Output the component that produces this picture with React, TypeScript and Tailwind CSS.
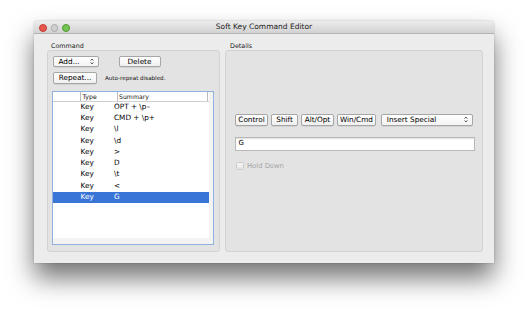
import React from "react";

// Soft Key Command Editor — Mac-style utility window

const FONT = { fontFamily: '"DejaVu Sans", "Liberation Sans", sans-serif' };

interface ButtonProps {
  label: string;
  width: string;
}

interface PopupProps {
  label: string;
  width: string;
}

const rows: [string, string][] = [
  ["Key", "OPT + \\p\u2013"],
  ["Key", "CMD + \\p+"],
  ["Key", "\\l"],
  ["Key", "\\d"],
  ["Key", ">"],
  ["Key", "D"],
  ["Key", "\\t"],
  ["Key", "<"],
  ["Key", "G"],
];

export default function App() {
  return (
    <div className="min-h-screen bg-white pt-[21px] pl-[34px]" style={FONT}>
      <div className="w-[460px] h-[242px] bg-[#ececec] rounded-t-[4px] flex flex-col shadow-[0_15px_26px_rgba(0,0,0,0.55),0_0_2px_rgba(0,0,0,0.25)]">
        {/* title bar */}
        <div className="relative h-[13px] shrink-0 rounded-t-[4px] bg-gradient-to-b from-[#ececec] to-[#d2d2d2] border-b border-[#b4b4b4] flex items-center justify-center">
          <div className="absolute left-[5px] top-[3px] flex gap-[4px]">
            <span className="w-[7.5px] h-[7.5px] rounded-full bg-[#e9564e] border-[0.5px] border-[#c23c35]" />
            <span className="w-[7.5px] h-[7.5px] rounded-full bg-[#cfcfcf] border-[0.5px] border-[#a9a9a9]" />
            <span className="w-[7.5px] h-[7.5px] rounded-full bg-[#76c552] border-[0.5px] border-[#4f9a33]" />
          </div>
          <span className="text-[7.5px] text-[#222] leading-none">Soft Key Command Editor</span>
        </div>

        {/* content */}
        <div className="flex-1 flex gap-[5px] pt-[8px] pl-[13px] pr-[11px] pb-[11px]">
          {/* Command */}
          <div className="w-[174px] flex flex-col">
            <div className="h-[8px] pl-[4px] text-[6.4px] leading-[8px] text-[#222]">Command</div>
            <div className="flex-1 bg-[#e3e3e3] border border-[#d2d2d2] rounded-[3px] pt-[4.5px] pl-[3.5px] pr-[5px] pb-[6px] flex flex-col">
              <div className="flex items-center gap-[20px] pl-[1px]">
                <Popup label="Add..." width="w-[46px]" />
                <Button label="Delete" width="w-[42px]" />
              </div>
              <div className="flex items-center gap-[8px] mt-[5px] pl-[1.5px]">
                <Button label="Repeat..." width="w-[44px]" />
                <span className="text-[5.6px] text-[#111]">Auto-repeat disabled.</span>
              </div>
              <div className="mt-[7px] flex-1 border-[1.5px] border-[#8fb2e3] bg-[#f3f3f3] flex flex-col">
                <div className="mr-[4px] mb-[6px] flex-1 bg-white flex flex-col">
                  <div className="h-[10px] border-b border-[#cfcfcf] flex text-[6.2px] leading-[10px] text-[#111]">
                    <div className="w-[27px]" />
                    <div className="w-[37px] border-l border-[#bdbdbd] pl-[2px]">Type</div>
                    <div className="w-[91px] border-l border-r border-[#bdbdbd] pl-[1.5px]">Summary</div>
                  </div>
                  {rows.map(([t, s], i) => {
                    const sel = i === rows.length - 1;
                    return (
                      <div
                        key={i}
                        className={`h-[11.3px] flex items-center text-[7.3px] ${sel ? "bg-[#3875d7] text-white" : "text-black"}`}
                      >
                        <div className="w-[28px]" />
                        <div className="w-[33.5px]">{t}</div>
                        <div className="flex-1">{s}</div>
                      </div>
                    );
                  })}
                </div>
              </div>
            </div>
          </div>

          {/* Details */}
          <div className="flex-1 flex flex-col">
            <div className="h-[8px] pl-[5px] text-[6.4px] leading-[8px] text-[#222]">Details</div>
            <div className="flex-1 bg-[#e3e3e3] border border-[#d2d2d2] rounded-[3px] pl-[9px] pr-[7px] pt-[63px] flex flex-col">
              <div className="flex items-center">
                <Button label="Control" width="w-[33px]" />
                <span className="w-[3.3px]" />
                <Button label="Shift" width="w-[26.5px]" />
                <span className="w-[3.3px]" />
                <Button label="Alt/Opt" width="w-[32.7px]" />
                <span className="w-[3.3px]" />
                <Button label="Win/Cmd" width="w-[38.7px]" />
                <span className="w-[5px]" />
                <Popup label="Insert Special" width="w-[92px]" />
              </div>
              <div className="mt-[11px] w-[240px] h-[14px] bg-white border border-[#b9b9b9] shadow-[inset_0_1px_1px_rgba(0,0,0,0.12)] flex items-center pl-[2.5px] text-[7px] text-black">
                G
              </div>
              <div className="mt-[10.5px] flex items-center gap-[3.5px] pl-[1px]">
                <span className="w-[7.5px] h-[7.5px] rounded-[1.5px] border border-[#cbcbcb] bg-gradient-to-b from-[#f4f4f4] to-[#e6e6e6]" />
                <span className="text-[6.8px] text-[#a3a3a3]">Hold Down</span>
              </div>
            </div>
          </div>
        </div>
      </div>
    </div>
  );
}

function Button({ label, width }: ButtonProps) {
  return (
    <div
      className={`${width} h-[11.5px] shrink-0 rounded-[2px] border border-[#a6a6a6] bg-gradient-to-b from-white to-[#f0f0f0] shadow-[0_0.5px_0.5px_rgba(0,0,0,0.15)] flex items-center justify-center text-[7.3px] leading-none text-black`}
    >
      {label}
    </div>
  );
}

function Popup({ label, width }: PopupProps) {
  return (
    <div
      className={`${width} h-[11.5px] shrink-0 rounded-[2px] border border-[#a6a6a6] bg-gradient-to-b from-white to-[#f3f3f3] shadow-[0_0.5px_0.5px_rgba(0,0,0,0.15)] flex items-center justify-between pl-[5px] pr-[4px] text-[7.3px] leading-none text-black`}
    >
      <span>{label}</span>
      <svg width="4" height="7" viewBox="0 0 4 7" className="shrink-0">
        <path d="M0.6 2.6 L2 1 L3.4 2.6" fill="none" stroke="#333" strokeWidth="0.8" />
        <path d="M0.6 4.4 L2 6 L3.4 4.4" fill="none" stroke="#333" strokeWidth="0.8" />
      </svg>
    </div>
  );
}
